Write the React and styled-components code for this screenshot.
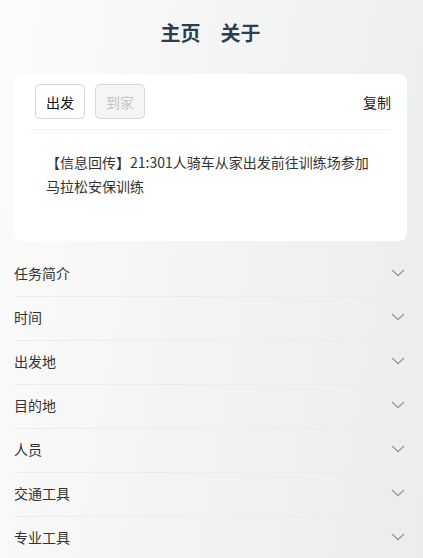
import React from "react";
import styled, { createGlobalStyle } from "styled-components";

const GlobalStyle = createGlobalStyle`
  html, body {
    margin: 0;
    padding: 0;
  }
  body {
    min-height: 558px;
    background: linear-gradient(100deg, #fcfcfc 0%, #f4f4f5 45%, #eaeced 100%);
    font-family: "Noto Sans CJK SC", "Liberation Sans", sans-serif;
    color: #333;
  }
`;

const Page = styled.div`
  padding: 0 16px 0 14px;
`;

const Nav = styled.nav`
  display: flex;
  justify-content: center;
  gap: 20px;
  padding: 18px 0 16px;
  line-height: 30px;
`;

const NavLink = styled.a`
  font-size: 20px;
  font-weight: 700;
  color: #2c3e50;
  text-decoration: none;
`;

const Card = styled.div`
  margin-top: 10px;
  background: #fff;
  border-radius: 8px;
  padding: 0 16px;
`;

const CardHeader = styled.div`
  display: flex;
  align-items: center;
  gap: 10px;
  padding: 10px 0 10px 5px;
  border-bottom: 1px solid #f2f2f2;
`;

const Button = styled.button`
  width: 50px;
  height: 35px;
  padding: 0;
  font-family: inherit;
  font-size: 14px;
  border-radius: 5px;
  border: 1px solid ${(p) => (p.disabled ? "#d9d9d9" : "#d4d4d4")};
  background: ${(p) => (p.disabled ? "#f5f5f5" : "#fff")};
  color: ${(p) => (p.disabled ? "#c4c4c4" : "#111")};
`;

const Copy = styled.span`
  margin-left: auto;
  font-size: 14px;
  color: #222;
`;

const CardBody = styled.div`
  padding: 20px 16px 43px;
  font-size: 14px;
  line-height: 24px;
  color: #333;
`;

const List = styled.div`
  margin-top: 12px;
`;

const Row = styled.div`
  box-sizing: border-box;
  display: flex;
  align-items: center;
  justify-content: space-between;
  height: 44px;
  padding-bottom: 3px;
  border-bottom: 1px solid #ececec;
  font-size: 14px;
  color: #333;
`;

const Chevron = () => (
  <svg width="14" height="8" viewBox="0 0 14 8" style={{ marginRight: 2 }}>
    <path d="M1 1l6 5.5L13 1" fill="none" stroke="#9a9a9a" strokeWidth="1.3" />
  </svg>
);

const items = ["任务简介", "时间", "出发地", "目的地", "人员", "交通工具", "专业工具"];

export default function App() {
  return (
    <>
      <GlobalStyle />
      <Page>
        <Nav>
          <NavLink href="#">主页</NavLink>
          <NavLink href="#">关于</NavLink>
        </Nav>
        <Card>
          <CardHeader>
            <Button>出发</Button>
            <Button disabled>到家</Button>
            <Copy>复制</Copy>
          </CardHeader>
          <CardBody>
            【信息回传】21:301人骑车从家出发前往训练场参加马拉松安保训练
          </CardBody>
        </Card>
        <List>
          {items.map((t) => (
            <Row key={t}>
              <span>{t}</span>
              <Chevron />
            </Row>
          ))}
        </List>
      </Page>
    </>
  );
}
